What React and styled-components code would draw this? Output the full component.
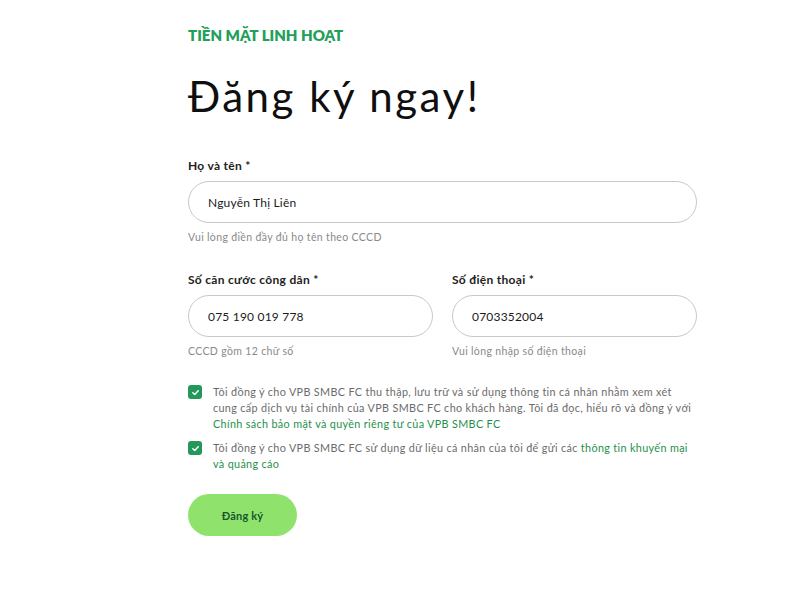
import React from "react";
import styled, { createGlobalStyle } from "styled-components";

const Global = createGlobalStyle`
  html, body { margin: 0; padding: 0; background: #ffffff; }
  body { font-family: Lato, "Noto Sans", sans-serif; color: #1b1b1b; }
  * { box-sizing: border-box; }
`;

const Page = styled.div`
  width: 800px;
  height: 600px;
  background: #fff;
  padding: 26px 0 0 188px;
`;

const Form = styled.form`
  width: 509px;
  display: flex;
  flex-direction: column;
`;

const Eyebrow = styled.div`
  font-family: Lato, sans-serif;
  font-weight: 800;
  font-size: 15px;
  color: #22a05a;
  line-height: 18px;
`;

const Heading = styled.h1`
  margin: 27px 0 0 0;
  font-family: Lato, sans-serif;
  font-weight: 400;
  font-size: 42px;
  line-height: 50px;
  color: #0f0f0f;
  letter-spacing: 2.5px;
`;

const Field = styled.div`
  display: flex;
  flex-direction: column;
  min-width: 0;
`;

const Label = styled.label`
  font-weight: 700;
  font-size: 12px;
  line-height: 16px;
  letter-spacing: 0.3px;
  color: #222;
  margin-bottom: 7px;
`;

const Input = styled.input`
  height: 42px;
  width: 100%;
  border: 1px solid #c9c9c9;
  border-radius: 21px;
  padding: 0 19px;
  font-family: Lato, sans-serif;
  font-size: 12px;
  letter-spacing: 0.2px;
  color: #1b1b1b;
  background: #fff;
  outline: none;
`;

const Help = styled.div`
  font-size: 10.5px;
  letter-spacing: 0.35px;
  color: #8a8a8a;
  margin-top: 8px;
  line-height: 12px;
`;

const Row = styled.div`
  display: grid;
  grid-template-columns: 1fr 1fr;
  column-gap: 19px;
  margin-top: ${(p) => p.$top}px;
`;

const Single = styled.div`
  margin-top: ${(p) => p.$top}px;
`;

const Consents = styled.div`
  margin-top: 27px;
  display: flex;
  flex-direction: column;
  gap: 8px;
`;

const Consent = styled.div`
  display: flex;
  align-items: flex-start;
  gap: 11px;
`;

const Box = styled.span`
  flex: 0 0 14px;
  width: 14px;
  height: 14px;
  border-radius: 3px;
  background: #24985a;
  margin-top: 1px;
  display: flex;
  align-items: center;
  justify-content: center;
`;

const ConsentText = styled.p`
  margin: 0;
  flex: 1;
  font-size: 10.8px;
  letter-spacing: 0.35px;
  line-height: 16px;
  color: #6b6b6b;
`;

const Link = styled.a`
  color: #1f8f4c;
  text-decoration: none;
`;

const Submit = styled.button`
  margin-top: 22px;
  width: 109px;
  height: 42px;
  border: none;
  border-radius: 21px;
  background: #8fe36c;
  color: #17572c;
  font-family: Lato, sans-serif;
  font-weight: 700;
  font-size: 11px;
  letter-spacing: 0.2px;
  cursor: pointer;
`;

const Check = () => (
  <svg width="9" height="9" viewBox="0 0 10 10">
    <path d="M2 5.2 L4.2 7.2 L8 3" fill="none" stroke="#fff" strokeWidth="1.6" strokeLinecap="round" strokeLinejoin="round" />
  </svg>
);

export default function App() {
  return (
    <>
      <Global />
      <Page>
        <Form onSubmit={(e) => e.preventDefault()}>
          <Eyebrow>TIỀN MẶT LINH HOẠT</Eyebrow>
          <Heading>Đăng ký ngay!</Heading>
          <Single $top={37}>
            <Field>
              <Label>Họ và tên *</Label>
              <Input defaultValue="Nguyễn Thị Liên" />
              <Help>Vui lòng điền đầy đủ họ tên theo CCCD</Help>
            </Field>
          </Single>
          <Row $top={29}>
            <Field>
              <Label>Số căn cước công dân *</Label>
              <Input defaultValue="075 190 019 778" />
              <Help>CCCD gồm 12 chữ số</Help>
            </Field>
            <Field>
              <Label>Số điện thoại *</Label>
              <Input defaultValue="0703352004" />
              <Help>Vui lòng nhập số điện thoại</Help>
            </Field>
          </Row>
          <Consents>
            <Consent>
              <Box><Check /></Box>
              <ConsentText>
                Tôi đồng ý cho VPB SMBC FC thu thập, lưu trữ và sử dụng thông tin cá nhân nhằm xem xét
                cung cấp dịch vụ tài chính của VPB SMBC FC cho khách hàng. Tôi đã đọc, hiểu rõ và đồng ý với{" "}
                <Link href="#">Chính sách bảo mật và quyền riêng tư của VPB SMBC FC</Link>
              </ConsentText>
            </Consent>
            <Consent>
              <Box><Check /></Box>
              <ConsentText>
                Tôi đồng ý cho VPB SMBC FC sử dụng dữ liệu cá nhân của tôi để gửi các{" "}
                <Link href="#">thông tin khuyến mại và quảng cáo</Link>
              </ConsentText>
            </Consent>
          </Consents>
          <Submit type="submit">Đăng ký</Submit>
        </Form>
      </Page>
    </>
  );
}
